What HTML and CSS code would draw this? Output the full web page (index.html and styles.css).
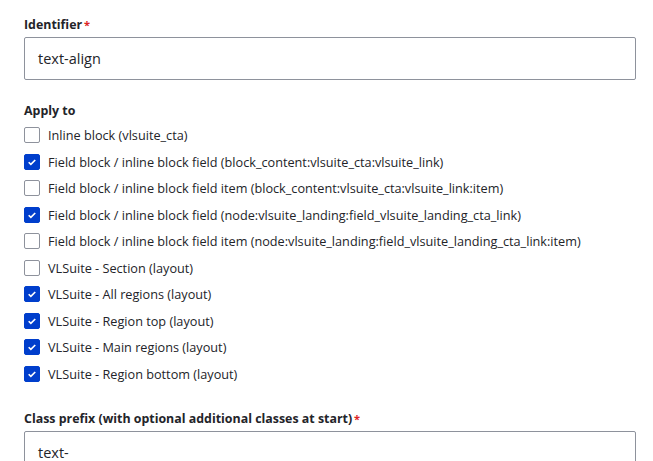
FILE: index.html
```html
<!DOCTYPE html>
<html>
<head>
<meta charset="utf-8">
<link rel="stylesheet" href="styles.css">
</head>
<body>
<div class="form">
  <div class="field field-id">
    <div class="label">Identifier<span class="req">*</span></div>
    <div class="input">text-align</div>
  </div>
  <div class="field field-apply">
    <div class="label">Apply to</div>
    <div class="checks">
      <div class="row"><span class="box"></span><span class="text">Inline block (vlsuite_cta)</span></div>
      <div class="row"><span class="box on"><svg viewBox="0 0 16 16"><path d="M4.2 8.3l2.5 2.4 5-5" /></svg></span><span class="text">Field block / inline block field (block_content:vlsuite_cta:vlsuite_link)</span></div>
      <div class="row"><span class="box"></span><span class="text">Field block / inline block field item (block_content:vlsuite_cta:vlsuite_link:item)</span></div>
      <div class="row"><span class="box on"><svg viewBox="0 0 16 16"><path d="M4.2 8.3l2.5 2.4 5-5" /></svg></span><span class="text">Field block / inline block field (node:vlsuite_landing:field_vlsuite_landing_cta_link)</span></div>
      <div class="row"><span class="box"></span><span class="text">Field block / inline block field item (node:vlsuite_landing:field_vlsuite_landing_cta_link:item)</span></div>
      <div class="row"><span class="box"></span><span class="text">VLSuite - Section (layout)</span></div>
      <div class="row"><span class="box on"><svg viewBox="0 0 16 16"><path d="M4.2 8.3l2.5 2.4 5-5" /></svg></span><span class="text">VLSuite - All regions (layout)</span></div>
      <div class="row"><span class="box on"><svg viewBox="0 0 16 16"><path d="M4.2 8.3l2.5 2.4 5-5" /></svg></span><span class="text">VLSuite - Region top (layout)</span></div>
      <div class="row"><span class="box on"><svg viewBox="0 0 16 16"><path d="M4.2 8.3l2.5 2.4 5-5" /></svg></span><span class="text">VLSuite - Main regions (layout)</span></div>
      <div class="row"><span class="box on"><svg viewBox="0 0 16 16"><path d="M4.2 8.3l2.5 2.4 5-5" /></svg></span><span class="text">VLSuite - Region bottom (layout)</span></div>
    </div>
  </div>
  <div class="field field-prefix">
    <div class="label">Class prefix (with optional additional classes at start)<span class="req">*</span></div>
    <div class="input">text-</div>
  </div>
</div>
</body>
</html>
```

FILE: styles.css
```css
html, body {
  margin: 0;
  padding: 0;
  background: #ffffff;
  overflow: hidden;
}
body {
  font-family: "Open Sans", "Noto Sans", sans-serif;
  color: #232429;
}
.form {
  width: 612px;
  padding: 17px 0 0 24px;
}
.label {
  font-weight: 700;
  font-size: 12.4px;
  line-height: 15px;
  color: #232429;
}
.req {
  color: #dc2323;
  margin-left: 2px;
  font-size: 11px;
}
.input {
  box-sizing: border-box;
  margin-top: 5px;
  height: 43px;
  border: 1px solid #8e929c;
  border-radius: 2px;
  padding: 0 0 0 13px;
  display: flex;
  align-items: center;
  font-size: 14.5px;
  color: #232429;
}
.field-apply {
  margin-top: 23px;
}
.checks {
  margin-top: 4px;
  display: flex;
  flex-direction: column;
}
.row {
  height: 26.5px;
  display: flex;
  align-items: center;
}
.box {
  box-sizing: border-box;
  width: 16px;
  height: 16px;
  border: 1px solid #8e929c;
  border-radius: 2px;
  flex: none;
  display: flex;
}
.box.on {
  background: #003ecc;
  border-color: #003ecc;
}
.box svg {
  width: 14px;
  height: 14px;
}
.box path {
  fill: none;
  stroke: #ffffff;
  stroke-width: 1.9;
}
.text {
  margin-left: 8px;
  font-size: 12.7px;
  color: #232429;
  white-space: nowrap;
}
.field-prefix {
  margin-top: 24px;
}
```
